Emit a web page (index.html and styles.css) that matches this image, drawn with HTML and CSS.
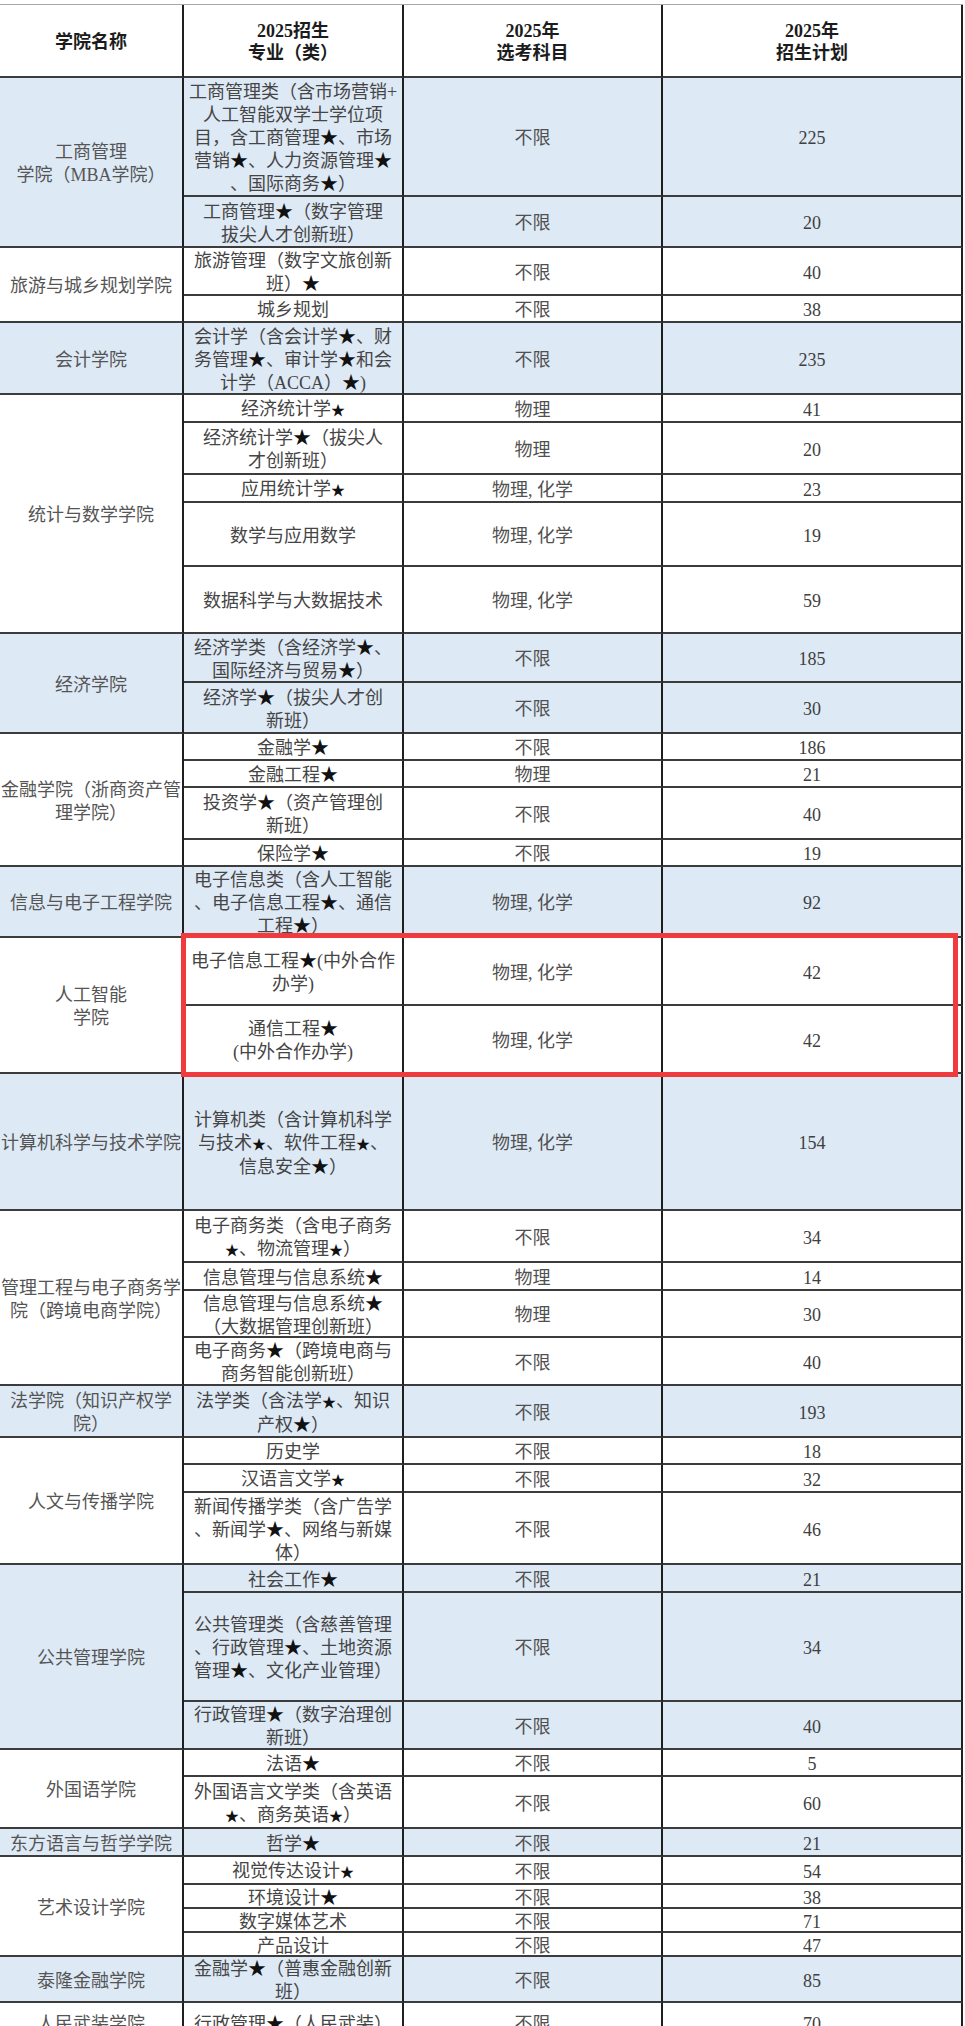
FILE: index.html
```html
<!DOCTYPE html>
<html lang="zh-CN">
<head>
<meta charset="utf-8">
<title>2025招生计划</title>
<link rel="stylesheet" href="styles.css">
</head>
<body>
<div class="t">
  <div class="c h"><span>学院名称</span></div>
  <div class="c h"><span>2025招生<br>专业（类）</span></div>
  <div class="c h"><span>2025年<br>选考科目</span></div>
  <div class="c h"><span>2025年<br>招生计划</span></div>

  <div class="c col b s2"><span>工商管理<br>学院（MBA学院）</span></div>
  <div class="c mj b"><span>工商管理类（含市场营销+<br>人工智能双学士学位项<br>目，含工商管理<i>★</i>、市场<br>营销<i>★</i>、人力资源管理<i>★</i><br>、国际商务<i>★</i>）</span></div>
  <div class="c sb b"><span>不限</span></div>
  <div class="c n b"><span>225</span></div>
  <div class="c mj b"><span>工商管理<i>★</i>（数字管理<br>拔尖人才创新班）</span></div>
  <div class="c sb b"><span>不限</span></div>
  <div class="c n b"><span>20</span></div>

  <div class="c col s2"><span>旅游与城乡规划学院</span></div>
  <div class="c mj"><span>旅游管理（数字文旅创新<br>班）<i>★</i></span></div>
  <div class="c sb"><span>不限</span></div>
  <div class="c n"><span>40</span></div>
  <div class="c mj"><span>城乡规划</span></div>
  <div class="c sb"><span>不限</span></div>
  <div class="c n"><span>38</span></div>

  <div class="c col b"><span>会计学院</span></div>
  <div class="c mj b"><span>会计学（含会计学<i>★</i>、财<br>务管理<i>★</i>、审计学<i>★</i>和会<br>计学（ACCA）<i>★</i>)</span></div>
  <div class="c sb b"><span>不限</span></div>
  <div class="c n b"><span>235</span></div>

  <div class="c col s5"><span>统计与数学学院</span></div>
  <div class="c mj"><span>经济统计学<i class="m">★</i></span></div>
  <div class="c sb"><span>物理</span></div>
  <div class="c n"><span>41</span></div>
  <div class="c mj"><span>经济统计学<i>★</i>（拔尖人<br>才创新班）</span></div>
  <div class="c sb"><span>物理</span></div>
  <div class="c n"><span>20</span></div>
  <div class="c mj"><span>应用统计学<i class="m">★</i></span></div>
  <div class="c sb"><span>物理, 化学</span></div>
  <div class="c n"><span>23</span></div>
  <div class="c mj"><span>数学与应用数学</span></div>
  <div class="c sb"><span>物理, 化学</span></div>
  <div class="c n"><span>19</span></div>
  <div class="c mj"><span>数据科学与大数据技术</span></div>
  <div class="c sb"><span>物理, 化学</span></div>
  <div class="c n"><span>59</span></div>

  <div class="c col b s2"><span>经济学院</span></div>
  <div class="c mj b"><span>经济学类（含经济学<i>★</i>、<br>国际经济与贸易<i>★</i>）</span></div>
  <div class="c sb b"><span>不限</span></div>
  <div class="c n b"><span>185</span></div>
  <div class="c mj b"><span>经济学<i>★</i>（拔尖人才创<br>新班）</span></div>
  <div class="c sb b"><span>不限</span></div>
  <div class="c n b"><span>30</span></div>

  <div class="c col s4"><span>金融学院（浙商资产管<br>理学院）</span></div>
  <div class="c mj"><span>金融学<i>★</i></span></div>
  <div class="c sb"><span>不限</span></div>
  <div class="c n"><span>186</span></div>
  <div class="c mj"><span>金融工程<i>★</i></span></div>
  <div class="c sb"><span>物理</span></div>
  <div class="c n"><span>21</span></div>
  <div class="c mj"><span>投资学<i>★</i>（资产管理创<br>新班）</span></div>
  <div class="c sb"><span>不限</span></div>
  <div class="c n"><span>40</span></div>
  <div class="c mj"><span>保险学<i>★</i></span></div>
  <div class="c sb"><span>不限</span></div>
  <div class="c n"><span>19</span></div>

  <div class="c col b"><span>信息与电子工程学院</span></div>
  <div class="c mj b"><span>电子信息类（含人工智能<br>、电子信息工程<i>★</i>、通信<br>工程<i>★</i>）</span></div>
  <div class="c sb b"><span>物理, 化学</span></div>
  <div class="c n b"><span>92</span></div>

  <div class="c col s2"><span>人工智能<br>学院</span></div>
  <div class="c mj"><span>电子信息工程<i>★</i>(中外合作<br>办学)</span></div>
  <div class="c sb"><span>物理, 化学</span></div>
  <div class="c n"><span>42</span></div>
  <div class="c mj"><span>通信工程<i>★</i><br>(中外合作办学)</span></div>
  <div class="c sb"><span>物理, 化学</span></div>
  <div class="c n"><span>42</span></div>

  <div class="c col b"><span>计算机科学与技术学院</span></div>
  <div class="c mj b"><span>计算机类（含计算机科学<br>与技术<i class="m">★</i>、软件工程<i class="m">★</i>、<br>信息安全<i>★</i>）</span></div>
  <div class="c sb b"><span>物理, 化学</span></div>
  <div class="c n b"><span>154</span></div>

  <div class="c col s4"><span>管理工程与电子商务学<br>院（跨境电商学院）</span></div>
  <div class="c mj"><span>电子商务类（含电子商务<br><i class="m">★</i>、物流管理<i class="m">★</i>）</span></div>
  <div class="c sb"><span>不限</span></div>
  <div class="c n"><span>34</span></div>
  <div class="c mj"><span>信息管理与信息系统<i>★</i></span></div>
  <div class="c sb"><span>物理</span></div>
  <div class="c n"><span>14</span></div>
  <div class="c mj"><span>信息管理与信息系统<i>★</i><br>（大数据管理创新班）</span></div>
  <div class="c sb"><span>物理</span></div>
  <div class="c n"><span>30</span></div>
  <div class="c mj"><span>电子商务<i>★</i>（跨境电商与<br>商务智能创新班）</span></div>
  <div class="c sb"><span>不限</span></div>
  <div class="c n"><span>40</span></div>

  <div class="c col b"><span>法学院（知识产权学<br>院）</span></div>
  <div class="c mj b"><span>法学类（含法学<i class="m">★</i>、知识<br>产权<i>★</i>）</span></div>
  <div class="c sb b"><span>不限</span></div>
  <div class="c n b"><span>193</span></div>

  <div class="c col s3"><span>人文与传播学院</span></div>
  <div class="c mj"><span>历史学</span></div>
  <div class="c sb"><span>不限</span></div>
  <div class="c n"><span>18</span></div>
  <div class="c mj"><span>汉语言文学<i class="m">★</i></span></div>
  <div class="c sb"><span>不限</span></div>
  <div class="c n"><span>32</span></div>
  <div class="c mj"><span>新闻传播学类（含广告学<br>、新闻学<i>★</i>、网络与新媒<br>体）</span></div>
  <div class="c sb"><span>不限</span></div>
  <div class="c n"><span>46</span></div>

  <div class="c col b s3"><span>公共管理学院</span></div>
  <div class="c mj b"><span>社会工作<i>★</i></span></div>
  <div class="c sb b"><span>不限</span></div>
  <div class="c n b"><span>21</span></div>
  <div class="c mj b"><span>公共管理类（含慈善管理<br>、行政管理<i>★</i>、土地资源<br>管理<i>★</i>、文化产业管理）</span></div>
  <div class="c sb b"><span>不限</span></div>
  <div class="c n b"><span>34</span></div>
  <div class="c mj b"><span>行政管理<i>★</i>（数字治理创<br>新班）</span></div>
  <div class="c sb b"><span>不限</span></div>
  <div class="c n b"><span>40</span></div>

  <div class="c col s2"><span>外国语学院</span></div>
  <div class="c mj"><span>法语<i>★</i></span></div>
  <div class="c sb"><span>不限</span></div>
  <div class="c n"><span>5</span></div>
  <div class="c mj"><span>外国语言文学类（含英语<br><i class="m">★</i>、商务英语<i class="m">★</i>）</span></div>
  <div class="c sb"><span>不限</span></div>
  <div class="c n"><span>60</span></div>

  <div class="c col b"><span>东方语言与哲学学院</span></div>
  <div class="c mj b"><span>哲学<i>★</i></span></div>
  <div class="c sb b"><span>不限</span></div>
  <div class="c n b"><span>21</span></div>

  <div class="c col s4"><span>艺术设计学院</span></div>
  <div class="c mj"><span>视觉传达设计<i class="m">★</i></span></div>
  <div class="c sb"><span>不限</span></div>
  <div class="c n"><span>54</span></div>
  <div class="c mj"><span>环境设计<i>★</i></span></div>
  <div class="c sb"><span>不限</span></div>
  <div class="c n"><span>38</span></div>
  <div class="c mj"><span>数字媒体艺术</span></div>
  <div class="c sb"><span>不限</span></div>
  <div class="c n"><span>71</span></div>
  <div class="c mj"><span>产品设计</span></div>
  <div class="c sb"><span>不限</span></div>
  <div class="c n"><span>47</span></div>

  <div class="c col b"><span>泰隆金融学院</span></div>
  <div class="c mj b"><span>金融学<i>★</i>（普惠金融创新<br>班）</span></div>
  <div class="c sb b"><span>不限</span></div>
  <div class="c n b"><span>85</span></div>

  <div class="c col"><span>人民武装学院</span></div>
  <div class="c mj"><span>行政管理<i>★</i>（人民武装）</span></div>
  <div class="c sb"><span>不限</span></div>
  <div class="c n"><span>70</span></div>

  <div class="mark"></div>
</div>
</body>
</html>
```

FILE: styles.css
```css
html, body {
  margin: 0;
  padding: 0;
  background: #ffffff;
}

body {
  font-family: "Liberation Serif", "Noto Sans CJK SC", serif;
  font-size: 18px;
  line-height: 23px;
  color: #505050;
}

.t {
  position: relative;
  margin-top: 4px;
  width: 963px;
  border-top: 1px solid #a8a8a8;
  display: grid;
  grid-template-columns: 184px 220px 259px 300px;
  grid-template-rows:
    73px 119px 51px 48px 27px 72px 28px 52px 28px 64px
    67px 49px 51px 27px 27px 52px 27px 71px 68px 68px
    137px 52px 28px 47px 48px 52px 27px 28px 72px 28px
    109px 48px 27px 52px 28px 28px 24px 24px 24px 46px
    40px;
}

.c {
  box-sizing: border-box;
  display: flex;
  align-items: center;
  justify-content: center;
  text-align: center;
  white-space: nowrap;
  overflow: hidden;
  padding-top: 4px;
  border-right: 2px solid #1f1f1f;
  border-bottom: 2px solid #3c3c3c;
  background: #ffffff;
}

.c.b {
  background: #dde9f5;
}

.c span {
  display: block;
}

.c i {
  font-style: normal;
  color: #111111;
}

.c i.m {
  font-size: 14px;
}

.h {
  font-weight: 700;
  color: #1c1c1c;
  line-height: 22px;
  padding-top: 2px;
}

.col {
  grid-column: 1;
  color: #555555;
}

.mj {
  color: #454545;
}

.sb {
  color: #505050;
}

.n {
  color: #404040;
}

.s2 { grid-row: span 2; }
.s3 { grid-row: span 3; }
.s4 { grid-row: span 4; }
.s5 { grid-row: span 5; }

.mark {
  position: absolute;
  grid-row: 19 / 21;
  grid-column: 2 / 5;
  top: -5px;
  left: -3px;
  right: 5px;
  bottom: -3px;
  border: 5px solid #ef3a3e;
  z-index: 2;
  pointer-events: none;
}
```
